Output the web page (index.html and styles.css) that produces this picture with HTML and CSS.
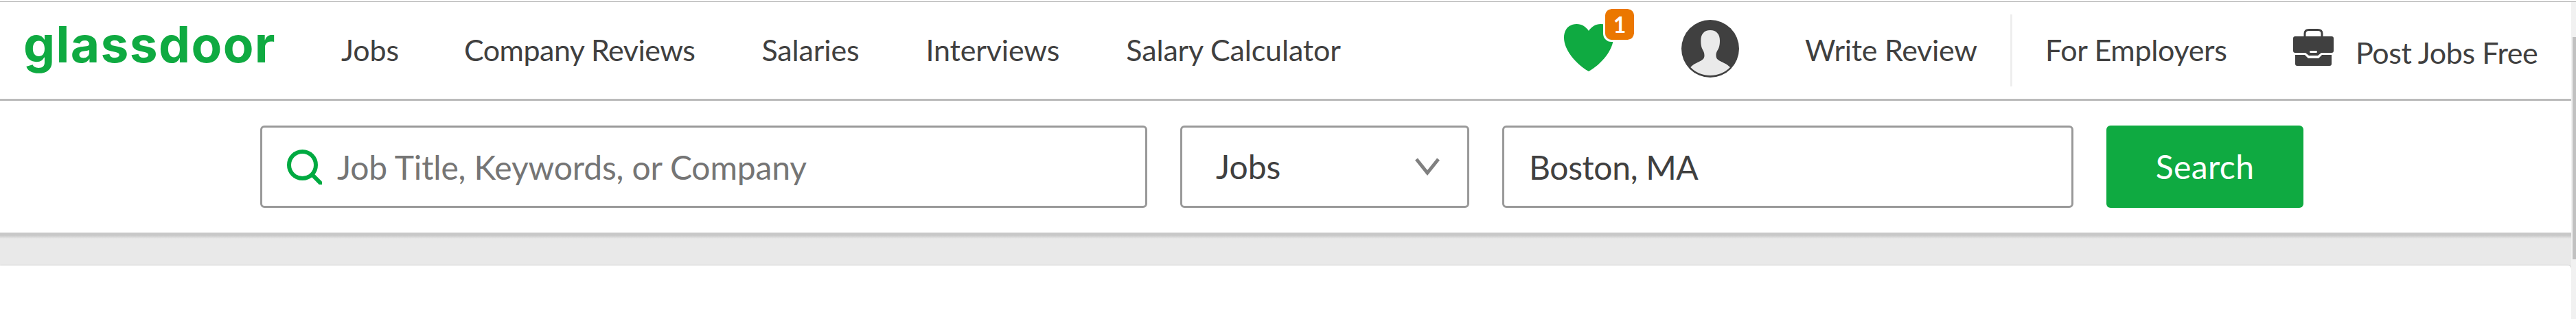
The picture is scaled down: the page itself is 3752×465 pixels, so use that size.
FILE: index.html
```html
<!DOCTYPE html>
<html lang="en">
<head>
<meta charset="utf-8">
<title>Glassdoor</title>
<link rel="stylesheet" href="styles.css">
</head>
<body>
<div class="page">
  <div class="content">
    <header class="topbar">
      <a class="logo">glassdoor</a>
      <nav class="nav">
        <a>Jobs</a>
        <a class="tight">Company Reviews</a>
        <a>Salaries</a>
        <a>Interviews</a>
        <a>Salary Calculator</a>
      </nav>
      <div class="account">
        <div class="saved">
          <svg class="heart" viewBox="0 0 72 69"><path d="M36 69C18 59 0 38 0 20C0 7 8 0 18.500 0C26 0 32 4 36 10C40 4 46 0 53.500 0C64 0 72 7 72 20C72 38 54 59 36 69Z"/></svg>
          <span class="badge">1</span>
        </div>
        <svg class="avatar" viewBox="0 0 84 84">
          <circle class="dark" cx="42" cy="42" r="42"/>
          <path class="pale" d="M42 15C51 15 56 21 56 30C56 45 50.500 43 50.500 52C50.500 61 62 60 71 69C56 85 28 85 13.300 69C22 60 33.500 61 33.500 52C33.500 43 28.300 45 28.300 30C28.300 21 33 15 42 15Z"/>
        </svg>
        <a class="write">Write Review</a>
      </div>
      <div class="employers">
        <a class="for">For Employers</a>
        <svg class="briefcase" viewBox="0 0 60 54">
          <path class="handle" d="M17 12V7Q17 1.500 23 1.500H36Q42 1.500 42 7V12"/>
          <path class="dark" d="M3 11H56Q59 11 59 14V32Q59 35 56 35H41L36 39H23L18 35H3Q0 35 0 32V14Q0 11 3 11Z"/>
          <path class="dark" d="M3 38H17L22 43H37L42 38H56V51Q56 54 53 54H6Q3 54 3 51Z"/>
          <rect class="clasp" x="24" y="32" width="11" height="3" rx="1.500"/>
        </svg>
        <a class="post">Post Jobs Free</a>
      </div>
    </header>
    <form class="search">
      <div class="field keywords">
        <svg class="lens" viewBox="0 0 51 51"><circle cx="22.500" cy="22.500" r="19.500"/><path d="M36 36L54 54"/></svg>
        <span>Job Title, Keywords, or Company</span>
      </div>
      <div class="field type">
        <span>Jobs</span>
        <svg class="chevron" viewBox="0 0 36 26"><path d="M2 2L18 22L34 2"/></svg>
      </div>
      <div class="field place"><span>Boston, MA</span></div>
      <button class="submit" type="button">Search</button>
    </form>
    <main class="backdrop"><div class="card"></div></main>
  </div>
  <div class="scrollbar"><div class="thumb"></div></div>
</div>
</body>
</html>
```
FILE: styles.css
```css
* { box-sizing: border-box; }
body {
  margin: 0;
  background: #fff;
  color: #404040;
  font-family: Lato, sans-serif;
  overflow: hidden;
}
.page {
  display: flex;
  height: 465px;
  padding-top: 2px;
}
.content {
  flex: 1;
  display: flex;
  flex-direction: column;
  border-top: 1px solid #b0b0b0;
}
.topbar {
  height: 144px;
  border-bottom: 3px solid #bbb;
  display: flex;
  font-size: 43px;
  letter-spacing: -0.3px;
  line-height: 52px;
  white-space: nowrap;
}
.logo {
  width: 460px;
  padding: 18px 0 0 34px;
  font: 700 73px/88px Inter, sans-serif;
  letter-spacing: 1.4px;
  color: #0faa41;
}
.nav {
  display: flex;
  gap: 97px;
  padding: 44px 0 0 37px;
  letter-spacing: -0.15px;
}
.tight { letter-spacing: -0.5px; margin-left: -2px; }
.account {
  margin-left: auto;
  height: 105px;
  margin-top: 18px;
  display: flex;
  border-right: 3px solid #eee;
  width: 653px;
}
.saved { position: relative; width: 171px; padding-top: 14px; }
.heart { display: block; width: 72px; height: 69px; fill: #0faa41; }
.badge {
  position: absolute;
  left: 57px;
  top: -11px;
  width: 48px;
  height: 51px;
  border: 3px solid #fff;
  border-radius: 12px;
  background: #eb7700;
  background-clip: padding-box;
  color: #fff;
  font-weight: 700;
  font-size: 32px;
  line-height: 45px;
  text-align: center;
}
.avatar { width: 84px; height: 84px; margin-top: 8px; flex: none; }
.dark { fill: #404040; }
.pale { fill: #eaeaea; }
.write { padding: 26px 0 0 96px; }
.employers { display: flex; width: 814px; padding-left: 48px; }
.for { padding-top: 44px; width: 361px; }
.briefcase { width: 60px; height: 54px; margin-top: 39px; flex: none; }
.handle { fill: none; stroke: #404040; stroke-width: 3; }
.clasp { fill: #fff; }
.post { padding: 48px 0 0 31px; letter-spacing: -0.4px; }
.search {
  height: 192px;
  padding: 36px 0 0 379px;
  display: flex;
  gap: 48px;
  font-size: 48px;
  letter-spacing: -0.15px;
  line-height: 58px;
  white-space: nowrap;
}
.field {
  height: 120px;
  border: 3px solid #999;
  border-radius: 6px;
  display: flex;
}
.keywords { width: 1292px; padding: 29px 0 0 36px; color: #757575; gap: 22px; }
.lens { width: 51px; height: 51px; margin-top: 3px; fill: none; stroke: #00aa41; stroke-width: 6; }
.type { width: 421px; padding: 28px 40px 0 49px; justify-content: space-between; letter-spacing: 0; }
.chevron { width: 36px; height: 26px; margin-top: 16px; fill: none; stroke: #808080; stroke-width: 5; }
.place { width: 832px; padding: 29px 0 0 36px; letter-spacing: -0.35px; }
.submit {
  width: 287px;
  height: 120px;
  border: 0;
  border-radius: 6px;
  background: #0faa41;
  color: #fff;
  font: 48px/58px Lato, sans-serif;
  letter-spacing: 0.4px;
  padding: 0 0 1px;
}
.backdrop {
  flex: 1;
  display: flex;
  padding-top: 48px;
  background: linear-gradient(#c8c8c8 0, #c8c8c8 4px, #e9e9e9 9px);
}
.card {
  flex: 1;
  background: #fff;
  border-radius: 0 5px 0 0;
  box-shadow: 0 0 2px rgba(0, 0, 0, .25);
}
.scrollbar {
  width: 7px;
  padding: 51px 0 0 2px;
  background: #f1f1f1;
  border-top: 1px solid #b0b0b0;
}
.thumb { height: 324px; background: #c1c1c1; }
```
